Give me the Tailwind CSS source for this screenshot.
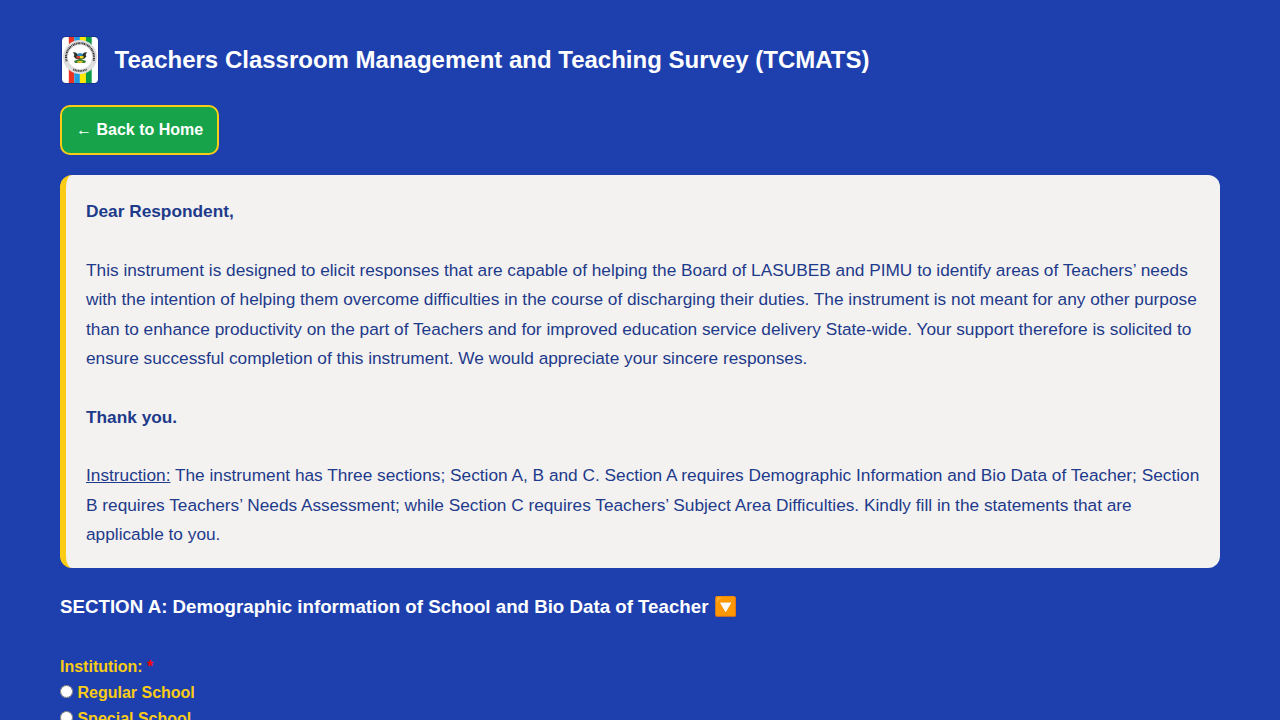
<!DOCTYPE html>
<html lang="en">
<head>
<meta charset="utf-8">
<title>TCMATS</title>
<script src="https://cdn.jsdelivr.net/npm/@tailwindcss/browser@4"></script>
</head>
<body class="bg-[#1e40af] font-['Liberation_Sans',Arial,sans-serif] text-white h-screen overflow-hidden">
<main class="px-[60px] pt-[35px]">
  <header class="flex items-center gap-[14.6px] h-[50px]">
    <svg class="w-10 h-[50px] shrink-0" viewBox="0 0 40 50">
      <defs>
        <clipPath id="card"><rect x="2" y="2" width="36" height="46" rx="4"/></clipPath>
      </defs>
      <rect x="1.2" y="1.2" width="37.6" height="47.6" rx="5" fill="#17308c"/>
      <g clip-path="url(#card)">
        <rect width="40" height="50" fill="#fff"/>
        <rect x="8.8" width="5.5" height="50" fill="#ea3323"/>
        <rect x="14.3" width="5.6" height="50" fill="#1e9be0"/>
        <rect x="19.9" width="6" height="50" fill="#ffe900"/>
        <rect x="25.9" width="5.8" height="50" fill="#0a9b48"/>
      </g>
      <circle cx="20" cy="22" r="17" fill="#dedede"/>
      <circle cx="20" cy="22" r="12" fill="#fff"/>
      <path d="M6.6 26.2A14 14 0 1 1 33.4 26.2" fill="none" stroke="#333" stroke-width="2" stroke-dasharray="1.1 .6 .8 .7 1.3 .5"/>
      <path d="M13.2 34.3Q20 37.6 26.8 34.3" fill="none" stroke="#444" stroke-width="1.9" stroke-dasharray="1.1 .55"/>
      <path d="M13 17l3.2.8 1.8 2 2-1.6 2 1.6 1.8-2L27 17l-1.4 3 .9 1.2L24 24h-8l-2.500-2.800.9-1.200z" fill="#2b332d"/>
      <path d="M17.500 18.500h5v2.500h-5z" fill="#2789bd"/><path d="M16.500 21h3.500v2.500h-3.500z" fill="#d84234"/><path d="M20 21h3.500v2.500H20z" fill="#f1d51b"/>
      <path d="M14 26l6-2.500 6 2.500-1 2H15z" fill="#3d7d3e"/><path d="M17.500 26h5v1.800h-5z" fill="#e8cf24"/>
    </svg>
    <h1 class="text-2xl font-bold whitespace-nowrap">Teachers Classroom Management and Teaching Survey (TCMATS)</h1>
  </header>
  <a class="mt-5 flex items-center w-[159px] h-[50px] px-[14px] pb-px rounded-[10px] border-2 border-[#facc15] bg-[#16a34a] font-bold whitespace-nowrap">← Back to Home</a>
  <section class="mt-5 px-5 pt-[22px] pb-[18px] rounded-xl border-l-[6px] border-[#facc15] bg-[#f3f2f1] text-[#1e3a8a] text-[17.28px] leading-[1.7]">
    <b>Dear Respondent,</b><br><br>
    This instrument is designed to elicit responses that are capable of helping the Board of LASUBEB and PIMU to identify areas of Teachers’ needs with the intention of helping them overcome difficulties in the course of discharging their duties. The instrument is not meant for any other purpose than to enhance productivity on the part of Teachers and for improved education service delivery State-wide. Your support therefore is solicited to ensure successful completion of this instrument. We would appreciate your sincere responses.<br><br>
    <b>Thank you.</b><br><br>
    <u>Instruction:</u> The instrument has Three sections; Section A, B and C. Section A requires Demographic Information and Bio Data of Teacher; Section B requires Teachers’ Needs Assessment; while Section C requires Teachers’ Subject Area Difficulties. Kindly fill in the statements that are applicable to you.
  </section>
  <h2 class="mt-[25px] h-[28px] text-[18.72px] leading-[28px] font-bold">SECTION A: Demographic information of School and Bio Data of Teacher 🔽</h2>
  <div class="mt-[33px] text-base leading-[26px] font-bold text-[#facc15]">
    <p>Institution: <span class="text-[#ff0000]">*</span></p>
    <label class="flex items-center"><input type="radio" name="institution" class="w-[13px] h-[13px] mr-[4.45px] -mt-[2px]">Regular School</label>
    <label class="flex items-center"><input type="radio" name="institution" class="w-[13px] h-[13px] mr-[4.45px] -mt-[2px]">Special School</label>
  </div>
</main>
</body>
</html>
